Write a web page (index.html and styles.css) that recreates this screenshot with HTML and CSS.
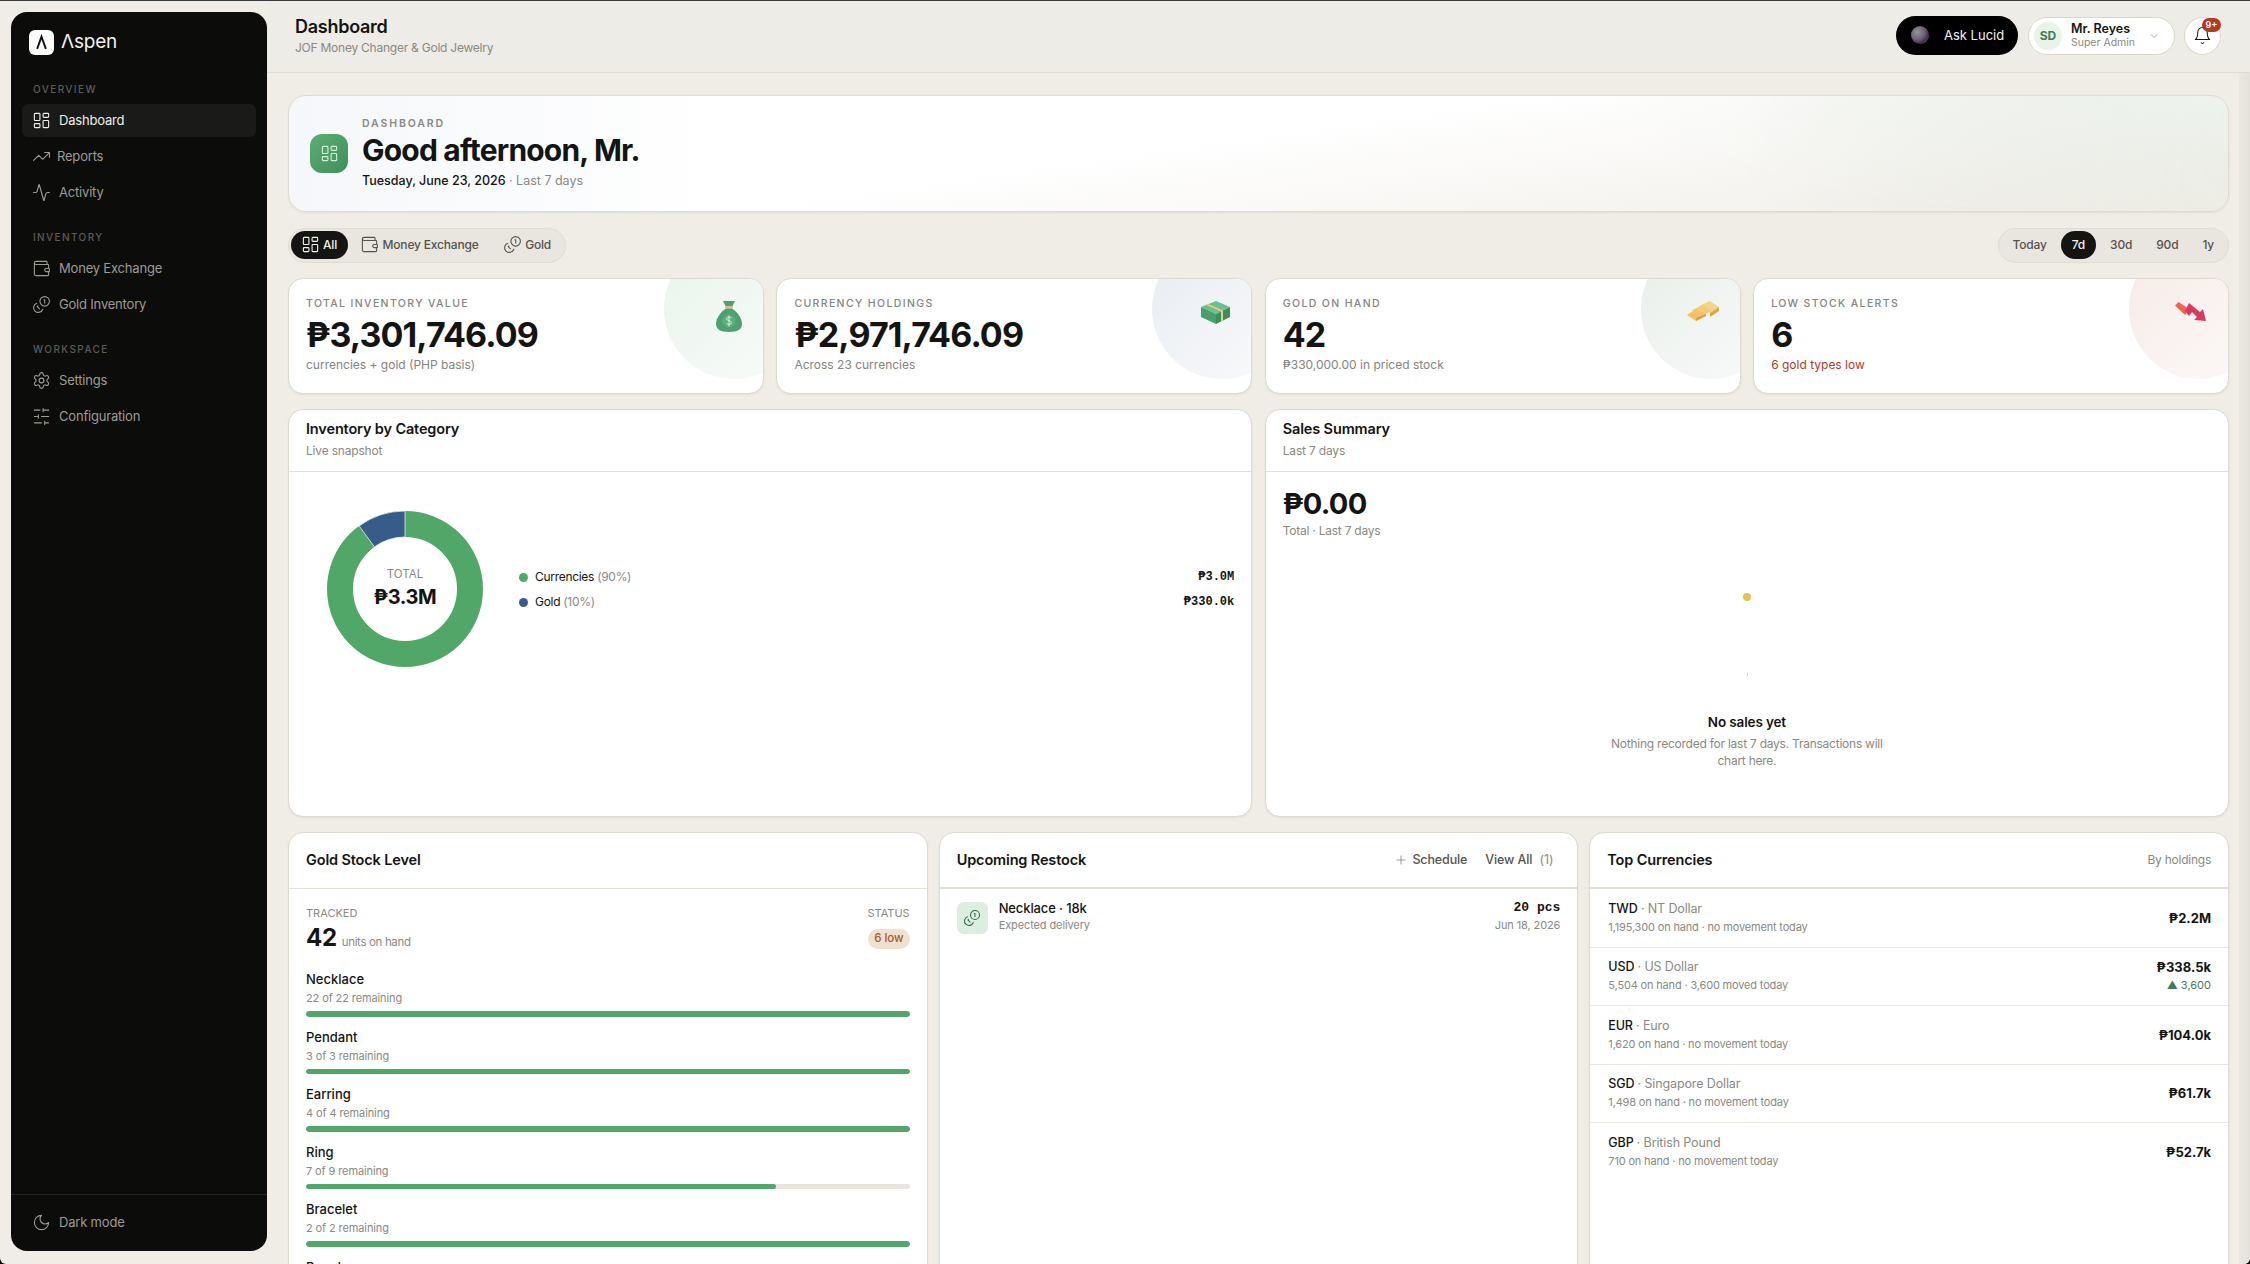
FILE: index.html
```html
<!DOCTYPE html>
<html lang="en">

<head>
    <meta charset="UTF-8">
    <meta name="viewport" content="width=device-width, initial-scale=1.0">
    <title>Aspen - Dashboard</title>
    <link rel="stylesheet" href="styles.css">
</head>

<body>
    <svg class="defs" width="0" height="0" aria-hidden="true">
        <symbol id="i-dash" viewBox="0 0 24 24"><rect x="3" y="3" width="7" height="9" rx="1"/><rect x="14" y="3" width="7" height="5" rx="1"/><rect x="14" y="12" width="7" height="9" rx="1"/><rect x="3" y="16" width="7" height="5" rx="1"/></symbol>
        <symbol id="i-trend" viewBox="0 0 24 24"><polyline points="22 7 13.5 15.5 8.5 10.5 2 17"/><polyline points="16 7 22 7 22 13"/></symbol>
        <symbol id="i-activity" viewBox="0 0 24 24"><path d="M22 12h-2.48a2 2 0 0 0-1.93 1.46l-2.35 8.36a.25.25 0 0 1-.48 0L9.24 2.18a.25.25 0 0 0-.48 0l-2.35 8.36A2 2 0 0 1 4.49 12H2"/></symbol>
        <symbol id="i-wallet" viewBox="0 0 24 24"><path d="M19 7V4a1 1 0 0 0-1-1H5a2 2 0 0 0 0 4h15a1 1 0 0 1 1 1v4h-3a2 2 0 0 0 0 4h3a1 1 0 0 0 1-1v-2a1 1 0 0 0-1-1"/><path d="M3 5v14a2 2 0 0 0 2 2h15a1 1 0 0 0 1-1v-4"/></symbol>
        <symbol id="i-coins" viewBox="0 0 24 24"><circle cx="16" cy="8" r="6"/><path d="M5.91 10.37A6 6 0 1 0 13.66 18"/><path d="M15 6h1v4"/><path d="m7.29 13.88-.7.71 2.82 2.82"/></symbol>
        <symbol id="i-gear" viewBox="0 0 24 24"><path d="M12.22 2h-.44a2 2 0 0 0-2 2v.18a2 2 0 0 1-1 1.73l-.43.25a2 2 0 0 1-2 0l-.15-.08a2 2 0 0 0-2.73.73l-.22.38a2 2 0 0 0 .73 2.73l.15.1a2 2 0 0 1 1 1.72v.51a2 2 0 0 1-1 1.74l-.15.09a2 2 0 0 0-.73 2.73l.22.38a2 2 0 0 0 2.73.73l.15-.08a2 2 0 0 1 2 0l.43.25a2 2 0 0 1 1 1.73V20a2 2 0 0 0 2 2h.44a2 2 0 0 0 2-2v-.18a2 2 0 0 1 1-1.73l.43-.25a2 2 0 0 1 2 0l.15.08a2 2 0 0 0 2.73-.73l.22-.39a2 2 0 0 0-.73-2.73l-.15-.08a2 2 0 0 1-1-1.74v-.5a2 2 0 0 1 1-1.74l.15-.09a2 2 0 0 0 .73-2.73l-.22-.38a2 2 0 0 0-2.73-.73l-.15.08a2 2 0 0 1-2 0l-.43-.25a2 2 0 0 1-1-1.73V4a2 2 0 0 0-2-2z"/><circle cx="12" cy="12" r="3"/></symbol>
        <symbol id="i-sliders" viewBox="0 0 24 24"><path d="M21 4h-7M10 4H3M21 12h-9M8 12H3M21 20h-5M12 20H3M14 2v4M8 10v4M16 18v4"/></symbol>
        <symbol id="i-moon" viewBox="0 0 24 24"><path d="M12 3a6 6 0 0 0 9 9 9 9 0 1 1-9-9Z"/></symbol>
        <symbol id="i-bell" viewBox="0 0 24 24"><path d="M6 8a6 6 0 0 1 12 0c0 7 3 9 3 9H3s3-2 3-9"/><path d="M10.3 21a1.94 1.94 0 0 0 3.4 0"/></symbol>
        <symbol id="i-chev" viewBox="0 0 24 24"><path d="m6 9 6 6 6-6"/></symbol>
        <symbol id="i-plus" viewBox="0 0 24 24"><path d="M5 12h14M12 5v14"/></symbol>
    </svg>

    <div class="app">
        <aside class="sidebar">
            <div class="brand">
                <span class="brand_mark"><svg viewBox="0 0 24 24"><path d="M6.5 20 12 4.5 17.5 20"/></svg></span>
                <span class="brand_name">Λspen</span>
            </div>

            <p class="nav_label">OVERVIEW</p>
            <a class="nav_item active"><svg class="ico"><use href="#i-dash"/></svg>Dashboard</a>
            <a class="nav_item tight"><svg class="ico"><use href="#i-trend"/></svg>Reports</a>
            <a class="nav_item"><svg class="ico"><use href="#i-activity"/></svg>Activity</a>

            <p class="nav_label">INVENTORY</p>
            <a class="nav_item"><svg class="ico"><use href="#i-wallet"/></svg>Money Exchange</a>
            <a class="nav_item"><svg class="ico"><use href="#i-coins"/></svg>Gold Inventory</a>

            <p class="nav_label">WORKSPACE</p>
            <a class="nav_item"><svg class="ico"><use href="#i-gear"/></svg>Settings</a>
            <a class="nav_item"><svg class="ico"><use href="#i-sliders"/></svg>Configuration</a>

            <div class="sidebar_foot">
                <a class="nav_item"><svg class="ico"><use href="#i-moon"/></svg>Dark mode</a>
            </div>
        </aside>

        <div class="main">
            <header class="topbar">
                <div>
                    <h1 class="top_title">Dashboard</h1>
                    <p class="top_sub">JOF Money Changer &amp; Gold Jewelry</p>
                </div>
                <div class="top_actions">
                    <button class="ask"><span class="orb"></span>Ask Lucid</button>
                    <div class="user">
                        <span class="avatar">SD</span>
                        <span class="user_text">
                            <b>Mr. Reyes</b>
                            <small>Super Admin</small>
                        </span>
                        <svg class="ico chev"><use href="#i-chev"/></svg>
                    </div>
                    <div class="bell">
                        <svg class="ico"><use href="#i-bell"/></svg>
                        <span class="badge">9+</span>
                    </div>
                </div>
            </header>

            <main class="content">
                <section class="hero">
                    <span class="hero_icon"><svg class="ico"><use href="#i-dash"/></svg></span>
                    <div class="hero_text">
                        <p class="hero_label">DASHBOARD</p>
                        <h2 class="hero_title">Good afternoon, Mr.</h2>
                        <p class="hero_date">Tuesday, June 23, 2026 <span>· Last 7 days</span></p>
                    </div>
                </section>

                <div class="filters">
                    <div class="seg">
                        <a class="seg_item on"><svg class="ico"><use href="#i-dash"/></svg>All</a>
                        <a class="seg_item"><svg class="ico"><use href="#i-wallet"/></svg>Money Exchange</a>
                        <a class="seg_item"><svg class="ico"><use href="#i-coins"/></svg>Gold</a>
                    </div>
                    <div class="seg range">
                        <a class="seg_item">Today</a>
                        <a class="seg_item on">7d</a>
                        <a class="seg_item">30d</a>
                        <a class="seg_item">90d</a>
                        <a class="seg_item">1y</a>
                    </div>
                </div>

                <div class="kpis">
                    <div class="card kpi">
                        <span class="blob green"></span>
                        <svg class="kpi_art" width="26" height="31" viewBox="0 0 26 31">
                            <path d="M7 0h12l-3 6h-6z" fill="#4fa070"/>
                            <rect x="9" y="5" width="8" height="2.5" rx="1" fill="#e8b98a"/>
                            <path d="M10 7.500h6c6 4 10 10 10 15.500 0 5-4 8-13 8S0 28 0 23C0 17.500 4 11.500 10 7.500z" fill="#4fa070"/>
                            <circle cx="13" cy="20" r="6.500" fill="#5cae7e"/>
                            <path d="M15.500 17c-1-1.300-5-1.300-5 .8 0 2.400 5 1.300 5 3.900 0 2-4 2-5 .6M13 14.500v11" fill="none" stroke="#d6f0df" stroke-width="1"/>
                        </svg>
                        <p class="kpi_label">TOTAL INVENTORY VALUE</p>
                        <p class="kpi_value">₱3,301,746.09</p>
                        <p class="kpi_sub">currencies + gold (PHP basis)</p>
                    </div>
                    <div class="card kpi">
                        <span class="blob blue"></span>
                        <svg class="kpi_art" width="29" height="23" viewBox="0 0 29 23">
                            <path d="M0 6 15 0l14 6-14 7z" fill="#6cc08f"/>
                            <path d="M0 6l15 7v10L0 16z" fill="#45a06c"/>
                            <path d="M29 6l-14 7v10l14-7z" fill="#389059"/>
                            <path d="M7 3 22 9.500v10l-2 1v-10L5 4z" fill="#edc97a"/>
                        </svg>
                        <p class="kpi_label">CURRENCY HOLDINGS</p>
                        <p class="kpi_value">₱2,971,746.09</p>
                        <p class="kpi_sub">Across 23 currencies</p>
                    </div>
                    <div class="card kpi">
                        <span class="blob teal"></span>
                        <svg class="kpi_art" width="32" height="20" viewBox="0 0 32 20">
                            <path d="M12 5 23 0l9 6-9 6z" fill="#f6d488"/>
                            <path d="M23 12l9-6v4l-9 6z" fill="#dba64a"/>
                            <path d="M5 9l11-5 8 6-11 6z" fill="#f4cb70"/>
                            <path d="M0 14 9 8l10 5-10 7z" fill="#f2c265"/>
                            <path d="M19 13v2l-10 5v-3z" fill="#d99f45"/>
                        </svg>
                        <p class="kpi_label">GOLD ON HAND</p>
                        <p class="kpi_value">42</p>
                        <p class="kpi_sub">₱330,000.00 in priced stock</p>
                    </div>
                    <div class="card kpi">
                        <span class="blob red"></span>
                        <svg class="kpi_art" width="32" height="20" viewBox="0 0 32 20">
                            <path d="M3.500 1 0 4.500 10 14l4-6z" fill="#ef6350"/>
                            <path d="M14 2 10 10l4 5 3-4 5 5-3 3 12 1-3-12-3 3z" fill="#d83a5c"/>
                        </svg>
                        <p class="kpi_label">LOW STOCK ALERTS</p>
                        <p class="kpi_value">6</p>
                        <p class="kpi_sub danger">6 gold types low</p>
                    </div>
                </div>

                <div class="charts">
                    <section class="card panel">
                        <header class="panel_head tall">
                            <h3>Inventory by Category</h3>
                            <p>Live snapshot</p>
                        </header>
                        <div class="donut_row">
                            <div class="donut">
                                <svg width="156" height="156" viewBox="0 0 156 156">
                                    <circle cx="78" cy="78" r="65" fill="none" stroke="#50a767" stroke-width="26"/>
                                    <path d="M78 0A78 78 0 0 0 32.150 14.900L47.440 35.930A52 52 0 0 1 78 26z" fill="#385c88" stroke="#fff" stroke-width="0.700"/>
                                </svg>
                                <div class="donut_text">
                                    <small>TOTAL</small>
                                    <b>₱3.3M</b>
                                </div>
                            </div>
                            <ul class="legend">
                                <li><i class="dot green_dot"></i>Currencies <span>(90%)</span><b>₱3.0M</b></li>
                                <li><i class="dot blue_dot"></i>Gold <span>(10%)</span><b>₱330.0k</b></li>
                            </ul>
                        </div>
                    </section>

                    <section class="card panel">
                        <header class="panel_head tall">
                            <h3>Sales Summary</h3>
                            <p>Last 7 days</p>
                        </header>
                        <div class="sales">
                            <p class="sales_value">₱0.00</p>
                            <p class="sales_sub">Total · Last 7 days</p>
                            <div class="empty">
                                <i class="empty_dot"></i>
                                <i class="empty_tick"></i>
                                <h4>No sales yet</h4>
                                <p>Nothing recorded for last 7 days. Transactions will chart here.</p>
                            </div>
                        </div>
                    </section>
                </div>

                <div class="lower">
                    <section class="card panel">
                        <header class="panel_head">
                            <h3>Gold Stock Level</h3>
                        </header>
                        <div class="stock">
                            <div class="stock_top">
                                <div>
                                    <small>TRACKED</small>
                                    <p class="stock_num"><b>42</b> units on hand</p>
                                </div>
                                <div class="stock_status">
                                    <small>STATUS</small>
                                    <span class="pill">6 low</span>
                                </div>
                            </div>
                            <div class="stock_item">
                                <h5>Necklace</h5>
                                <p>22 of 22 remaining</p>
                                <div class="bar"><div class="fill" style="width:100%"></div></div>
                            </div>
                            <div class="stock_item">
                                <h5>Pendant</h5>
                                <p>3 of 3 remaining</p>
                                <div class="bar"><div class="fill" style="width:100%"></div></div>
                            </div>
                            <div class="stock_item">
                                <h5>Earring</h5>
                                <p>4 of 4 remaining</p>
                                <div class="bar"><div class="fill" style="width:100%"></div></div>
                            </div>
                            <div class="stock_item">
                                <h5>Ring</h5>
                                <p>7 of 9 remaining</p>
                                <div class="bar"><div class="fill" style="width:77.8%"></div></div>
                            </div>
                            <div class="stock_item">
                                <h5>Bracelet</h5>
                                <p>2 of 2 remaining</p>
                                <div class="bar"><div class="fill" style="width:100%"></div></div>
                            </div>
                            <div class="stock_item">
                                <h5>Bangle</h5>
                                <p>2 of 2 remaining</p>
                                <div class="bar"><div class="fill" style="width:100%"></div></div>
                            </div>
                        </div>
                    </section>

                    <section class="card panel">
                        <header class="panel_head row">
                            <h3>Upcoming Restock</h3>
                            <div class="head_links">
                                <a><svg class="ico"><use href="#i-plus"/></svg>Schedule</a>
                                <a>View All <span>(1)</span></a>
                            </div>
                        </header>
                        <div class="restock">
                            <span class="restock_icon"><svg class="ico"><use href="#i-coins"/></svg></span>
                            <div class="restock_text">
                                <h5>Necklace · 18k</h5>
                                <p>Expected delivery</p>
                            </div>
                            <div class="restock_right">
                                <b>20 pcs</b>
                                <p>Jun 18, 2026</p>
                            </div>
                        </div>
                    </section>

                    <section class="card panel">
                        <header class="panel_head row">
                            <h3>Top Currencies</h3>
                            <span class="head_note">By holdings</span>
                        </header>
                        <div class="cur">
                            <div><h5>TWD <span>· NT Dollar</span></h5><p>1,195,300 on hand · no movement today</p></div>
                            <div class="cur_right"><b>₱2.2M</b></div>
                        </div>
                        <div class="cur">
                            <div><h5>USD <span>· US Dollar</span></h5><p>5,504 on hand · 3,600 moved today</p></div>
                            <div class="cur_right"><b>₱338.5k</b><em>▲ 3,600</em></div>
                        </div>
                        <div class="cur">
                            <div><h5>EUR <span>· Euro</span></h5><p>1,620 on hand · no movement today</p></div>
                            <div class="cur_right"><b>₱104.0k</b></div>
                        </div>
                        <div class="cur">
                            <div><h5>SGD <span>· Singapore Dollar</span></h5><p>1,498 on hand · no movement today</p></div>
                            <div class="cur_right"><b>₱61.7k</b></div>
                        </div>
                        <div class="cur">
                            <div><h5>GBP <span>· British Pound</span></h5><p>710 on hand · no movement today</p></div>
                            <div class="cur_right"><b>₱52.7k</b></div>
                        </div>
                    </section>
                </div>
            </main>
        </div>
    </div>
</body>

</html>
```

FILE: styles.css
```css
* {
    margin: 0;
    padding: 0;
    box-sizing: border-box;
}

html,
body {
    height: 100%;
    background: #000;
    overflow: hidden;
}

body {
    font-family: Inter, "Noto Sans", sans-serif;
    color: #141412;
    font-size: 13px;
}

.defs {
    position: absolute;
}

.ico {
    width: 19px;
    height: 19px;
    fill: none;
    stroke: currentColor;
    stroke-width: 1.4;
    stroke-linecap: round;
    stroke-linejoin: round;
    flex: none;
}

h1,
h2,
h3,
h4,
h5 {
    font-weight: 600;
}

ul {
    list-style: none;
}

/* shell */
.app {
    position: relative;
    display: flex;
    height: 1264px;
    background: #f0ede6;
    border-top: 1px solid #3c3c3c;
    border-radius: 0 0 6px 6px;
    overflow: hidden;
}

/* darker band down the right edge, under the top bar */
.app::after {
    content: "";
    position: absolute;
    top: 72px;
    right: 0;
    bottom: 0;
    width: 11px;
    background: linear-gradient(90deg, #eae7e0, #e4e1da);
}

.sidebar {
    width: 256px;
    flex: none;
    margin: 11px 0 13px 11px;
    background: #0c0c0b;
    border-radius: 16px;
    display: flex;
    flex-direction: column;
    padding: 18px 11px 0;
    color: #9d9b94;
}

.brand {
    display: flex;
    align-items: center;
    gap: 7px;
    padding-left: 7px;
    height: 25px;
    margin-bottom: 8.500px;
}

.brand_mark {
    width: 25px;
    height: 25px;
    background: #fff;
    border-radius: 6px;
    display: flex;
    align-items: center;
    justify-content: center;
}

.brand_mark svg {
    width: 19px;
    height: 19px;
    fill: none;
    stroke: #111;
    stroke-width: 2.4;
}

.brand_name {
    color: #f2f1ec;
    font-size: 19px;
    letter-spacing: -0.01em;
    margin-top: -2px;
}

.nav_label {
    font-size: 10px;
    font-weight: 500;
    letter-spacing: 0.14em;
    color: #5c5b56;
    padding-left: 11px;
    height: 14px;
    line-height: 14px;
    margin: 18.500px 0 7.500px;
}

.nav_item {
    display: flex;
    align-items: center;
    gap: 8.500px;
    height: 33px;
    padding-left: 9.500px;
    margin-bottom: 3px;
    border-radius: 6px;
    font-size: 13px;
    letter-spacing: -0.015em;
}

.nav_item.tight {
    gap: 6.500px;
}

.nav_item.active {
    background: #1a1a19;
    color: #efeee9;
}

.sidebar_foot {
    margin: auto -11px 0;
    border-top: 1px solid #262624;
    padding: 10.500px 11px 9.500px;
}

.main {
    flex: 1;
    min-width: 0;
    display: flex;
    flex-direction: column;
}

.topbar {
    height: 72px;
    flex: none;
    background: #eeece6;
    border-bottom: 1px solid #e0dcd2;
    display: flex;
    justify-content: space-between;
    align-items: center;
    padding: 0 29px 2px 28px;
}

.top_title {
    font-size: 18px;
    line-height: 24px;
    letter-spacing: -0.015em;
}

.top_sub {
    font-size: 12px;
    line-height: 18px;
    color: #8a8982;
    letter-spacing: -0.02em;
}

.top_actions {
    display: flex;
    align-items: center;
}

.ask {
    display: flex;
    align-items: center;
    gap: 15px;
    width: 122px;
    height: 39px;
    padding: 0 0 2px 15px;
    margin-right: 10px;
    background: #000;
    color: #f4f3ee;
    border: 0;
    border-radius: 20px;
    font: 400 13px Inter, sans-serif;
}

.orb {
    width: 18px;
    height: 18px;
    border-radius: 50%;
    background: radial-gradient(circle at 35% 35%, #8c9a94 0%, #6f5c78 45%, #3a2c44 70%, #d9d2e0 88%, #222 100%);
}

.user {
    display: flex;
    align-items: center;
    width: 147px;
    height: 38px;
    padding-left: 5px;
    margin-right: 9px;
    background: #fff;
    border: 1px solid #ddd7ca;
    border-radius: 19px;
}

.avatar {
    width: 28px;
    height: 28px;
    border-radius: 50%;
    background: #e8f3ea;
    color: #3f7d56;
    font-size: 12px;
    font-weight: 700;
    display: flex;
    align-items: center;
    justify-content: center;
    margin-right: 9px;
}

.user_text {
    display: flex;
    flex-direction: column;
    flex: 1;
}

.user_text b {
    font-size: 12.500px;
    font-weight: 600;
    line-height: 15px;
}

.user_text small {
    font-size: 10.500px;
    color: #8a8982;
    line-height: 14px;
}

.chev {
    width: 12px;
    height: 12px;
    color: #8a8982;
    margin-right: 14px;
}

.bell {
    position: relative;
    width: 37px;
    height: 38px;
    background: #fff;
    border: 1px solid #ddd7ca;
    border-radius: 50%;
    display: flex;
    align-items: center;
    justify-content: center;
}

.bell .ico {
    width: 19px;
    height: 19px;
    stroke-width: 1.3;
}

.badge {
    position: absolute;
    top: 0;
    right: -1px;
    width: 19px;
    height: 14px;
    border-radius: 7px;
    background: #b23a24;
    color: #fff;
    font-size: 9px;
    font-weight: 600;
    text-align: center;
    line-height: 14px;
}

.content {
    flex: 1;
    min-height: 0;
    overflow: hidden;
    padding: 21.500px 21px 0;
    display: flex;
    flex-direction: column;
    gap: 15.500px;
}

.card {
    background: #fff;
    border: 1px solid #dfdacf;
    border-radius: 15px;
    box-shadow: 0 1px 2px rgba(60, 50, 30, 0.08);
}

/* hero */
.hero {
    height: 117.500px;
    flex: none;
    display: flex;
    align-items: center;
    gap: 14px;
    padding-left: 21px;
    border: 1px solid #dfdacf;
    border-radius: 18px;
    box-shadow: 0 1px 2px rgba(60, 50, 30, 0.08);
    background:
        radial-gradient(ellipse 32% 110% at 100% 0%, #eef3ee 0%, rgba(238, 243, 238, 0) 100%),
        linear-gradient(172deg, rgba(255, 255, 255, 0) 45%, rgba(238, 235, 228, 0.9) 100%),
        linear-gradient(100deg, rgba(255, 255, 255, 0) 75%, #e4e6de 100%),
        linear-gradient(90deg, #f5f7fa 0%, #fff 22%, #fff 100%);
}

.hero_icon {
    width: 38px;
    height: 39px;
    border-radius: 12px;
    background: linear-gradient(135deg, #5cae72, #3f8f5a);
    color: #d6eedd;
    display: flex;
    align-items: center;
    justify-content: center;
}

.hero_text {
    padding-top: 2px;
}

.hero_label {
    font-size: 10.500px;
    font-weight: 600;
    letter-spacing: 0.18em;
    color: #8a8982;
    line-height: 14px;
}

.hero_title {
    font-size: 30px;
    font-weight: 700;
    letter-spacing: -0.027em;
    line-height: 37px;
    margin-top: 1px;
}

.hero_date {
    font-size: 12.500px;
    font-weight: 500;
    line-height: 20px;
    margin-top: 2px;
}

.hero_date span {
    color: #8a8982;
    font-weight: 400;
}

/* filter pills */
.filters {
    display: flex;
    justify-content: space-between;
    flex: none;
}

.seg {
    display: flex;
    align-items: center;
    height: 35px;
    padding: 0 2px;
    background: #e9e6df;
    border: 1px solid #e0dcd2;
    border-radius: 18px;
    color: #55544f;
}

.seg_item {
    display: flex;
    align-items: center;
    gap: 3.500px;
    height: 28px;
    padding: 0 12px 2px;
    border-radius: 14px;
    font-size: 12px;
    font-weight: 500;
    letter-spacing: -0.015em;
}

.seg_item.on {
    background: #141412;
    color: #f4f3ee;
    padding: 0 11px 2px 9.500px;
}

.range .seg_item.on {
    padding: 0 11px 2px;
    margin: 0 2px;
}

.kpis {
    display: grid;
    grid-template-columns: repeat(4, 1fr);
    gap: 12.500px;
    flex: none;
}

.kpi {
    position: relative;
    height: 115.500px;
    padding: 18px 17px 0;
    overflow: hidden;
}

.blob {
    position: absolute;
    top: -40px;
    right: -41px;
    width: 140px;
    height: 140px;
    border-radius: 50%;
}

.green {
    background: linear-gradient(135deg, #e8f3eb, #fafcfa);
}

.blue {
    background: linear-gradient(135deg, #e7ebf1, #fafbfc);
}

.teal {
    background: linear-gradient(135deg, #e8eeea, #fafbfa);
}

.red {
    background: linear-gradient(135deg, #f6eae6, #fdfafa);
}

.kpi_art {
    position: absolute;
    top: 22px;
    right: 21px;
}

.kpi_label {
    position: relative;
    font-size: 10.500px;
    font-weight: 500;
    letter-spacing: 0.13em;
    color: #85847d;
    line-height: 14px;
}

.kpi_value {
    position: relative;
    font-size: 34px;
    font-weight: 700;
    letter-spacing: -0.026em;
    line-height: 42px;
    margin-top: 3px;
}

.kpi_sub {
    position: relative;
    font-size: 12px;
    color: #85847d;
    line-height: 18px;
}

.danger {
    color: #b23a24;
}

/* panels */
.charts {
    display: grid;
    grid-template-columns: 1fr 1fr;
    gap: 12.500px;
    height: 407.500px;
    flex: none;
}

.panel {
    display: flex;
    flex-direction: column;
    min-width: 0;
    overflow: hidden;
}

.panel_head {
    height: 56px;
    flex: none;
    padding: 0 17px 1px;
    border-bottom: 1px solid #e4e0d6;
    display: flex;
    align-items: center;
}

.panel_head.tall {
    height: 62px;
    display: block;
    padding-top: 9.500px;
}

.panel_head.row {
    justify-content: space-between;
    border-bottom-width: 2px;
}

.panel_head h3 {
    font-size: 14.500px;
    line-height: 18px;
    letter-spacing: -0.01em;
}

.panel_head p {
    font-size: 12px;
    line-height: 16px;
    margin-top: 5px;
    color: #8a8982;
    letter-spacing: -0.015em;
}

.donut_row {
    display: flex;
    align-items: center;
    height: 196px;
    margin-top: 19px;
    padding: 0 17px 0 38px;
}

.donut {
    position: relative;
    width: 156px;
    height: 156px;
    flex: none;
}

.donut svg {
    display: block;
}

.donut_text {
    position: absolute;
    inset: 0;
    display: flex;
    flex-direction: column;
    align-items: center;
    justify-content: center;
    padding-bottom: 2px;
}

.donut_text small {
    font-size: 11.500px;
    color: #8a8982;
    line-height: 16px;
}

.donut_text b {
    font-size: 20px;
    font-weight: 700;
    line-height: 26px;
    letter-spacing: -0.02em;
    margin-top: 2px;
}

.legend {
    flex: 1;
    margin-left: 36px;
}

.legend li {
    display: flex;
    align-items: center;
    font-size: 12px;
    letter-spacing: -0.025em;
    height: 25px;
    white-space: pre;
}

.legend span {
    color: #8a8982;
}

.legend b {
    margin-left: auto;
    font-family: "Liberation Mono", monospace;
    font-size: 12px;
    font-weight: 700;
    letter-spacing: 0;
}

.dot {
    width: 9px;
    height: 9px;
    border-radius: 50%;
    margin-right: 7px;
    margin-top: 2px;
}

.green_dot {
    background: #50a767;
}

.blue_dot {
    background: #385c88;
}

.sales {
    padding: 14px 17px 0;
    flex: 1;
    display: flex;
    flex-direction: column;
}

.sales_value {
    font-size: 29px;
    font-weight: 700;
    letter-spacing: -0.025em;
    line-height: 36px;
}

.sales_sub {
    font-size: 12px;
    color: #8a8982;
    line-height: 16px;
    margin-top: 1px;
    letter-spacing: -0.02em;
}

.empty {
    position: relative;
    flex: 1;
    text-align: center;
    padding-top: 173px;
}

.empty_dot {
    position: absolute;
    left: 50%;
    top: 53.500px;
    width: 8px;
    height: 8px;
    margin-left: -4px;
    background: #e9bf4d;
    border-radius: 50%;
}

.empty_tick {
    position: absolute;
    left: 50%;
    top: 133.500px;
    width: 1px;
    height: 3px;
    background: #cfcfca;
}

.empty h4 {
    font-size: 13.500px;
    line-height: 20px;
    letter-spacing: -0.01em;
}

.empty p {
    width: 300px;
    margin: 3px auto 0;
    font-size: 12px;
    line-height: 17px;
    color: #8a8982;
    letter-spacing: -0.02em;
}

.lower {
    display: grid;
    grid-template-columns: repeat(3, 1fr);
    gap: 11px;
    height: 520px;
    flex: none;
}

/* gold stock */
.stock {
    padding: 15px 17px 0;
}

.stock_top {
    display: flex;
    justify-content: space-between;
    margin-bottom: 13px;
}

.stock_top small {
    display: block;
    font-size: 11px;
    line-height: 18px;
    color: #8a8982;
}

.stock_num {
    font-size: 11.500px;
    color: #8a8982;
    line-height: 28px;
    letter-spacing: -0.03em;
    margin-top: 2px;
}

.stock_num b {
    font-size: 24px;
    font-weight: 700;
    color: #141412;
    margin-right: 2px;
    letter-spacing: -0.01em;
}

.stock_status {
    text-align: right;
}

.pill {
    display: inline-block;
    height: 20px;
    line-height: 19px;
    padding: 0 6px;
    margin-top: 6.500px;
    border-radius: 10px;
    background: #f0e0cf;
    color: #a8582a;
    font-size: 11.500px;
    font-weight: 500;
}

.stock_item {
    height: 57.600px;
}

.stock_item h5 {
    font-size: 13px;
    font-weight: 500;
    line-height: 20px;
}

.stock_item p {
    font-size: 11px;
    color: #8a8982;
    line-height: 18px;
    letter-spacing: -0.01em;
}

.bar {
    height: 5.500px;
    margin-top: 4px;
    border-radius: 3px;
    background: #e9e6df;
    overflow: hidden;
}

.fill {
    height: 100%;
    background: #50a767;
    border-radius: 3px;
}

/* restock */
.head_links {
    display: flex;
    gap: 18px;
    padding-right: 7px;
    font-size: 12.500px;
    font-weight: 500;
    color: #55544f;
    letter-spacing: -0.01em;
}

.head_links a {
    display: flex;
    align-items: center;
    gap: 4px;
    white-space: pre;
}

.head_links .ico {
    width: 14px;
    height: 14px;
    color: #85847d;
}

.head_links span {
    color: #8a8982;
    font-weight: 400;
}

.restock {
    display: flex;
    align-items: center;
    gap: 11px;
    padding: 12px 17px;
}

.restock_text {
    margin-top: -2px;
}

.restock h5 {
    font-size: 13px;
    font-weight: 500;
    line-height: 18px;
    letter-spacing: -0.01em;
}

.restock p {
    font-size: 11px;
    color: #8a8982;
    line-height: 17px;
    letter-spacing: -0.01em;
}

.restock_icon {
    width: 31px;
    height: 32px;
    border-radius: 7px;
    background: #dceee0;
    color: #2f6b48;
    display: flex;
    align-items: center;
    justify-content: center;
}

.restock_icon .ico {
    width: 18px;
    height: 18px;
}

.restock_right {
    margin: -2px 0 0 auto;
    text-align: right;
}

.restock_right b {
    display: block;
    font-family: "Liberation Mono", monospace;
    font-size: 13px;
    line-height: 18px;
}

/* currencies */
.head_note {
    font-size: 12px;
    color: #8a8982;
    letter-spacing: -0.02em;
}

.cur {
    display: flex;
    justify-content: space-between;
    align-items: center;
    height: 58.500px;
    padding: 0 17px 0 18px;
    border-bottom: 1px solid #e9e6df;
}

.cur:last-child {
    border-bottom: 0;
}

.cur h5 {
    font-size: 12.500px;
    font-weight: 500;
    line-height: 18px;
    letter-spacing: -0.01em;
}

.cur h5 span {
    color: #8a8982;
    font-weight: 400;
}

.cur p {
    font-size: 11px;
    color: #8a8982;
    line-height: 18px;
    letter-spacing: -0.015em;
}

.cur_right {
    text-align: right;
    display: flex;
    flex-direction: column;
}

.cur_right b {
    font-size: 13px;
    font-weight: 700;
    line-height: 18px;
}

.cur_right em {
    font-style: normal;
    font-size: 11px;
    color: #3f7d56;
    line-height: 18px;
}
```
